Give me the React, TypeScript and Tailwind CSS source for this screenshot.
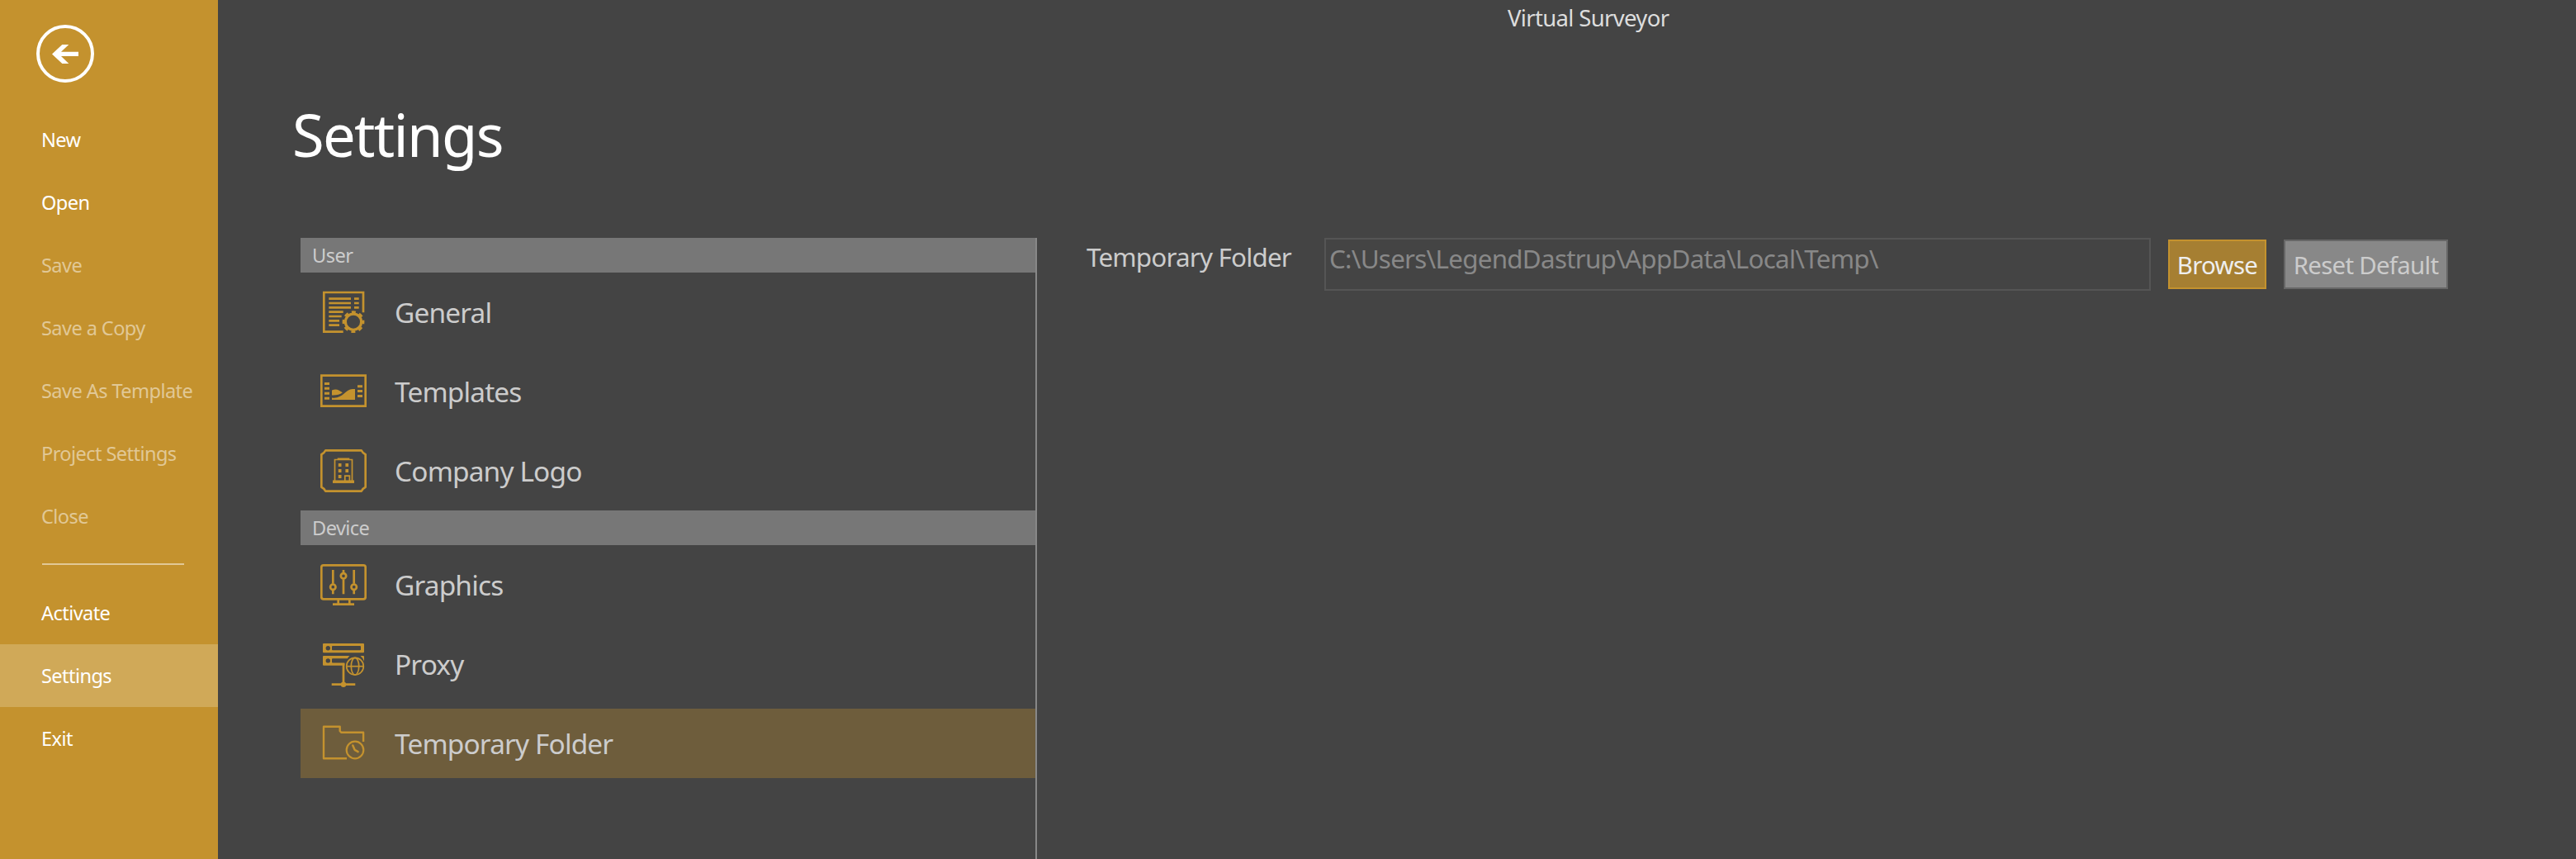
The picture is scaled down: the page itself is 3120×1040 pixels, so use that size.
import type { ReactNode } from "react";
import clsx from "clsx";

type NavItem = { label: string; disabled?: boolean; active?: boolean };

const fileItems: NavItem[] = [
  { label: "New" },
  { label: "Open" },
  { label: "Save", disabled: true },
  { label: "Save a Copy", disabled: true },
  { label: "Save As Template", disabled: true },
  { label: "Project Settings", disabled: true },
  { label: "Close", disabled: true },
];

const appItems: NavItem[] = [
  { label: "Activate" },
  { label: "Settings", active: true },
  { label: "Exit" },
];

function Icon({ children }: { children: ReactNode }) {
  return (
    <svg
      className="h-14 w-14 shrink-0 text-[#c4922e]"
      viewBox="0 0 56 56"
      fill="none"
      stroke="currentColor"
      strokeWidth="2.7"
    >
      {children}
    </svg>
  );
}

function GeneralIcon() {
  return (
    <Icon>
      <path d="M27.7 51.7H4.3V4H52v24.3" />
      <path d="M10.3 11.7H37M10.3 17H37M10.3 22.3H37M10.3 27.7h17.4M10.3 33h15.4M10.3 38.3H23M10.3 43.7H23M41 11.7h5.7M41 17h5.7M41 22.3h5.7" />
      <circle cx="40" cy="39.7" r="9.6" strokeWidth="3.2" />
      {/* gear teeth */}
      <circle
        cx="40"
        cy="39.7"
        r="12"
        strokeWidth="2.8"
        strokeDasharray="5 4.425"
        strokeDashoffset="2.5"
      />
    </Icon>
  );
}

function TemplatesIcon() {
  return (
    <Icon>
      <path d="M1.3 8.7h53.4v37H1.3z" />
      <path
        strokeWidth="3"
        d="M5 18.4h6M5 24.3h6M5 30.3h6M5 36.3h6M45 21.7h6M45 27.5h6M45 33.4h6"
      />
      <path
        fill="currentColor"
        stroke="none"
        d="M14 26.6Q18.5 24.6 22.3 26.4L26.9 29.2Q22 32.8 14 32.4zM14 35.6C27 37.5 30 25 39 25h3v13H14z"
      />
    </Icon>
  );
}

function CompanyLogoIcon() {
  return (
    <Icon>
      <path
        strokeLinejoin="round"
        d="M6.3 3.3h43.4q1.6 3.4 5 5v39.4q-3.4 1.6-5 5H6.3q-1.6-3.4-5-5V8.3q3.4-1.6 5-5z"
      />
      <path strokeWidth="1.7" d="M17.5 40V14.5h21V40M20.7 13.3h14.6M29.8 40v-5.8h5.6V40" />
      <path strokeWidth="3.5" d="M15 41.2h26" />
      <path
        strokeWidth="3.8"
        d="M21.8 21h3.7M21.8 28h3.7M21.8 35h3.7M30.4 21h3.7M30.4 28h3.7"
      />
    </Icon>
  );
}

function GraphicsIcon() {
  return (
    <Icon>
      <rect x="1.3" y="4.3" width="53.4" height="41" rx="2.5" />
      <path d="M15.3 10v16.8M15.3 34.6v4.7M28 10v3.4M28 21.2v18.1M40.7 10v16.8M40.7 34.6v4.7" />
      <circle cx="15.3" cy="30.7" r="3.2" />
      <circle cx="28" cy="17.3" r="3.2" />
      <circle cx="40.7" cy="30.7" r="3.2" />
      <path d="M21.7 46v5M35.3 46v5M15 51.7h26" />
    </Icon>
  );
}

function ProxyIcon() {
  return (
    <Icon>
      <path
        fill="currentColor"
        fillRule="evenodd"
        stroke="none"
        d="M4 3h48q1 0 1 1v9.3q0 1-1 1H4q-1 0-1-1V4q0-1 1-1zM9.3 6a2.7 2.7 0 1 0 0 5.4a2.7 2.7 0 0 0 0-5.4zM15 6q-1 0-1 1v3.2q0 1 1 1h33q1 0 1-1V7q0-1-1-1z"
      />
      <path
        fill="currentColor"
        fillRule="evenodd"
        stroke="none"
        d="M4 18h31.5q-1.6 1.4-2.6 3.3H15q-1 0-1 1v3.2q0 1 1 1h14.4v3.2H4q-1 0-1-1V19q0-1 1-1zM9.3 21.2a2.7 2.7 0 1 0 0 5.4a2.7 2.7 0 0 0 0-5.4zM48.5 18H52q1 0 1 1v5.5q-1.5-4-4.5-6.5z"
      />
      <path d="M28 27v25M13.7 52.7h28.6" />
      <circle cx="28" cy="52.7" r="3.2" fill="currentColor" stroke="none" />
      <g strokeWidth="1.7">
        <circle cx="42" cy="30.7" r="10.3" />
        <ellipse cx="42" cy="30.7" rx="4.7" ry="10.3" />
        <path d="M31.7 30.7h20.6" />
      </g>
    </Icon>
  );
}

function TemporaryFolderIcon() {
  return (
    <Icon>
      <path
        strokeWidth="2.4"
        strokeLinejoin="round"
        d="M32 46.3H4V7.7h19.7V13l1.5 1.7h26.9V26"
      />
      <circle cx="42" cy="36" r="10.3" strokeWidth="2.2" />
      <path
        strokeWidth="2.5"
        strokeLinecap="round"
        strokeLinejoin="round"
        d="M39.3 30.5l2.3 5.3 4 2.3"
      />
    </Icon>
  );
}

const groups = [
  {
    title: "User",
    items: [
      { label: "General", icon: <GeneralIcon /> },
      { label: "Templates", icon: <TemplatesIcon /> },
      { label: "Company Logo", icon: <CompanyLogoIcon /> },
    ],
  },
  {
    title: "Device",
    items: [
      { label: "Graphics", icon: <GraphicsIcon /> },
      { label: "Proxy", icon: <ProxyIcon /> },
      { label: "Temporary Folder", icon: <TemporaryFolderIcon />, selected: true },
    ],
  },
];

function NavButton({ label, disabled, active }: NavItem) {
  return (
    <button
      disabled={disabled}
      className={clsx(
        "block h-19 w-full pl-[50px] text-left text-[23.6px] leading-[76px] tracking-[-0.025em]",
        disabled ? "text-[#e1c896]" : "text-white",
        active && "bg-[#d0a958]",
      )}
    >
      {label}
    </button>
  );
}

function Sidebar() {
  return (
    <aside className="w-66 shrink-0 bg-[#c4922e] pt-[30px]">
      <button aria-label="Back" className="ml-11 block h-[70px] w-[70px]">
        <svg viewBox="0 0 70 70" className="h-full w-full text-white">
          <circle cx="35" cy="35" r="33" fill="none" stroke="currentColor" strokeWidth="4" />
          <path
            fill="currentColor"
            d="M19 35.4L31.3 24h8L30 32.7h21V38H30l9.3 9h-8z"
          />
        </svg>
      </button>
      <nav className="mt-[31px]">
        {fileItems.map((item) => (
          <NavButton key={item.label} {...item} />
        ))}
        <hr className="mt-[19px] mb-5 ml-[51px] h-0.5 w-43 border-0 bg-[#e1c896]" />
        {appItems.map((item) => (
          <NavButton key={item.label} {...item} />
        ))}
      </nav>
    </aside>
  );
}

function SettingsList() {
  return (
    <div className="w-[892px] shrink-0 border-r-2 border-[#888888]">
      {groups.map((group) => (
        <section key={group.title}>
          <h2 className="h-[42px] bg-[#777777] pl-3.5 text-[23.6px] leading-[42px] tracking-[-0.024em] text-[#cccccc]">
            {group.title}
          </h2>
          <ul>
            {group.items.map((item) => (
              <li key={item.label} className="py-1.5">
                <div
                  className={clsx(
                    "flex h-21 items-center pl-6",
                    "selected" in item && "bg-[#6e5d3c]",
                  )}
                >
                  {item.icon}
                  <span className="ml-[34px] text-[33.4px] leading-[84px] tracking-[-0.025em] text-[#cccccc]">
                    {item.label}
                  </span>
                </div>
              </li>
            ))}
          </ul>
        </section>
      ))}
    </div>
  );
}

function TemporaryFolderPanel() {
  return (
    <div className="flex items-start pl-[60px] whitespace-nowrap">
      <label className="w-72 text-[31.4px] leading-[45px] tracking-[-0.026em] text-[#cccccc]">
        Temporary Folder
      </label>
      <div className="h-16 w-[1001px] border-2 border-[#555555] pl-1 text-[31.4px] leading-[45px] tracking-[-0.024em] text-[#888888]">
        C:\Users\LegendDastrup\AppData\Local\Temp\
      </div>
      <button className="mt-0.5 ml-[21px] h-15 w-[119px] border-2 border-[#c4922e] bg-[#a67f32] pt-0.5 text-[29.4px] leading-[54px] tracking-[-0.024em] text-[#eeeeee]">
        Browse
      </button>
      <button className="mt-0.5 ml-[21px] h-15 w-[199px] border-2 border-[#666666] bg-[#888888] pt-0.5 text-[29.4px] leading-[54px] tracking-[-0.024em] text-[#cccccc]">
        Reset Default
      </button>
    </div>
  );
}

export default function App() {
  return (
    <div className="flex h-[1040px] w-[3120px] overflow-hidden bg-[#444444] font-['Noto_Sans',sans-serif]">
      <Sidebar />
      <main className="flex flex-1 flex-col">
        <div className="h-[42px] pl-[1562px] text-[27.5px] leading-[44px] tracking-[-0.024em] text-[#dddddd]">
          Virtual Surveyor
        </div>
        <h1 className="mt-[71px] ml-[90px] h-[175px] text-[70.5px] leading-[100px] tracking-[-0.024em] text-white">
          Settings
        </h1>
        <div className="ml-[100px] flex flex-1">
          <SettingsList />
          <TemporaryFolderPanel />
        </div>
      </main>
    </div>
  );
}
